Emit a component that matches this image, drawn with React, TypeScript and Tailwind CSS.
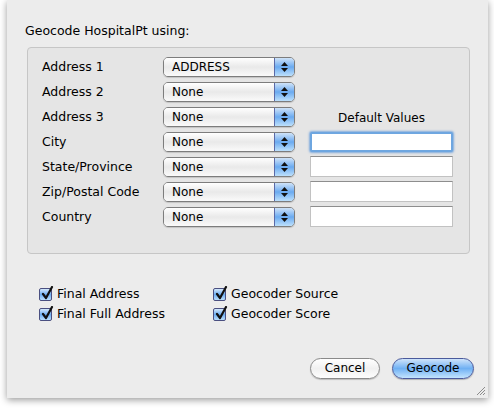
import React from 'react';

const FONT = { fontFamily: '"DejaVu Sans", "Liberation Sans", sans-serif' };

const fields = [
  { label: 'Address 1', value: 'ADDRESS', input: false },
  { label: 'Address 2', value: 'None', input: false },
  { label: 'Address 3', value: 'None', input: false },
  { label: 'City', value: 'None', input: true, focused: true },
  { label: 'State/Province', value: 'None', input: true },
  { label: 'Zip/Postal Code', value: 'None', input: true },
  { label: 'Country', value: 'None', input: true },
];

// Aqua style popup button
const PopUp: React.FC<{ value: string }> = ({ value }) => (
  <div className="flex h-[20px] w-[132px] overflow-hidden rounded-[5px] border border-[#7d7d7d] shadow-[0_1px_1px_rgba(0,0,0,0.15)]">
    <div className="flex flex-1 items-center bg-gradient-to-b from-white via-[#e9e9e9] to-[#fafafa] pl-[8px] text-[12px] leading-none text-black">
      {value}
    </div>
    <div className="flex w-[20px] flex-col items-center justify-center gap-[2px] border-l border-[#5a6aa8] bg-gradient-to-b from-[#cfe3f8] via-[#6aaaf0] to-[#bde0fb]">
      <svg width="7" height="4" viewBox="0 0 7 4">
        <path d="M3.5 0 L7 4 L0 4 Z" fill="#111" />
      </svg>
      <svg width="7" height="4" viewBox="0 0 7 4">
        <path d="M0 0 L7 0 L3.5 4 Z" fill="#111" />
      </svg>
    </div>
  </div>
);

const TextField: React.FC<{ focused?: boolean }> = ({ focused }) =>
  focused ? (
    <div className="h-[20px] w-[143px] rounded-[2px] border-[2px] border-[#6ea6e0] bg-white shadow-[0_0_2px_1px_rgba(90,150,220,0.7)]" />
  ) : (
    <div className="h-[21px] w-[143px] border border-[#c2c2c2] border-t-[#8e8e8e] bg-white" />
  );

const CheckBox: React.FC<{ label: string }> = ({ label }) => (
  <div className="flex h-[20px] items-center gap-[5px]">
    <div className="relative h-[13px] w-[13px] rounded-[2px] border border-[#4a4f80] bg-gradient-to-b from-[#d4e8fb] via-[#6daef2] to-[#b9defc]">
      <svg className="absolute -top-[3px] left-[1px]" width="13" height="14" viewBox="0 0 13 14">
        <path d="M2 8 L5 12 L11 1" fill="none" stroke="#111" strokeWidth="2.2" strokeLinecap="round" strokeLinejoin="round" />
      </svg>
    </div>
    <span className="text-[12.5px] text-black">{label}</span>
  </div>
);

export default function App() {
  return (
    <div className="h-[409px] w-[494px] overflow-hidden bg-white" style={FONT}>
      <div className="relative ml-[7px] h-[398px] w-[481px] bg-[#ececec] shadow-[0_2px_7px_rgba(0,0,0,0.4)]">
        {/* heading */}
        <div className="pl-[18px] pt-[25px] text-[12.5px] leading-none text-black">Geocode HospitalPt using:</div>

        {/* field mapping group */}
        <div className="ml-[20px] mt-[9px] h-[207px] w-[443px] rounded-[4px] border border-[#c6c6c6] bg-[#e5e5e5] pl-[14px] pt-[9px]">
          <div className="flex flex-col gap-[5px]">
            {fields.map((f, i) => (
              <div key={f.label} className="flex h-[20px] items-center">
                <div className="w-[121px] pt-[1px] text-[12.5px] text-black">{f.label}</div>
                <PopUp value={f.value} />
                <div className="ml-[15px] flex h-[20px] w-[143px] items-center justify-center">
                  {f.input ? (
                    <TextField focused={f.focused} />
                  ) : i === 2 ? (
                    <span className="pt-[2px] text-[12px] text-black">Default Values</span>
                  ) : null}
                </div>
              </div>
            ))}
          </div>
        </div>

        {/* output columns */}
        <div className="ml-[32px] mt-[31px] grid w-[320px] grid-cols-[174px_1fr]">
          <CheckBox label="Final Address" />
          <CheckBox label="Geocoder Source" />
          <CheckBox label="Final Full Address" />
          <CheckBox label="Geocoder Score" />
        </div>

        {/* buttons */}
        <div className="mr-[14px] mt-[33px] flex justify-end gap-[12px]">
          <button className="h-[21px] w-[70px] rounded-full border border-[#8a8a8a] bg-gradient-to-b from-white via-[#f0f0f0] to-[#fdfdfd] text-[12px] leading-none text-black shadow-[0_1px_1px_rgba(0,0,0,0.2)]">
            Cancel
          </button>
          <button className="h-[21px] w-[82px] rounded-full border border-[#4b5a9c] bg-gradient-to-b from-[#cfe4fa] via-[#6fb0f3] to-[#c3e4fd] text-[12px] leading-none text-black shadow-[0_1px_1px_rgba(0,0,0,0.25)]">
            Geocode
          </button>
        </div>

        {/* resize grip */}
        <svg className="absolute bottom-[2px] right-[2px]" width="11" height="11" viewBox="0 0 11 11">
          <path d="M10 2 L2 10 M10 5 L5 10 M10 8 L8 10" stroke="#8c8c8c" strokeWidth="1" />
        </svg>
      </div>
    </div>
  );
}
